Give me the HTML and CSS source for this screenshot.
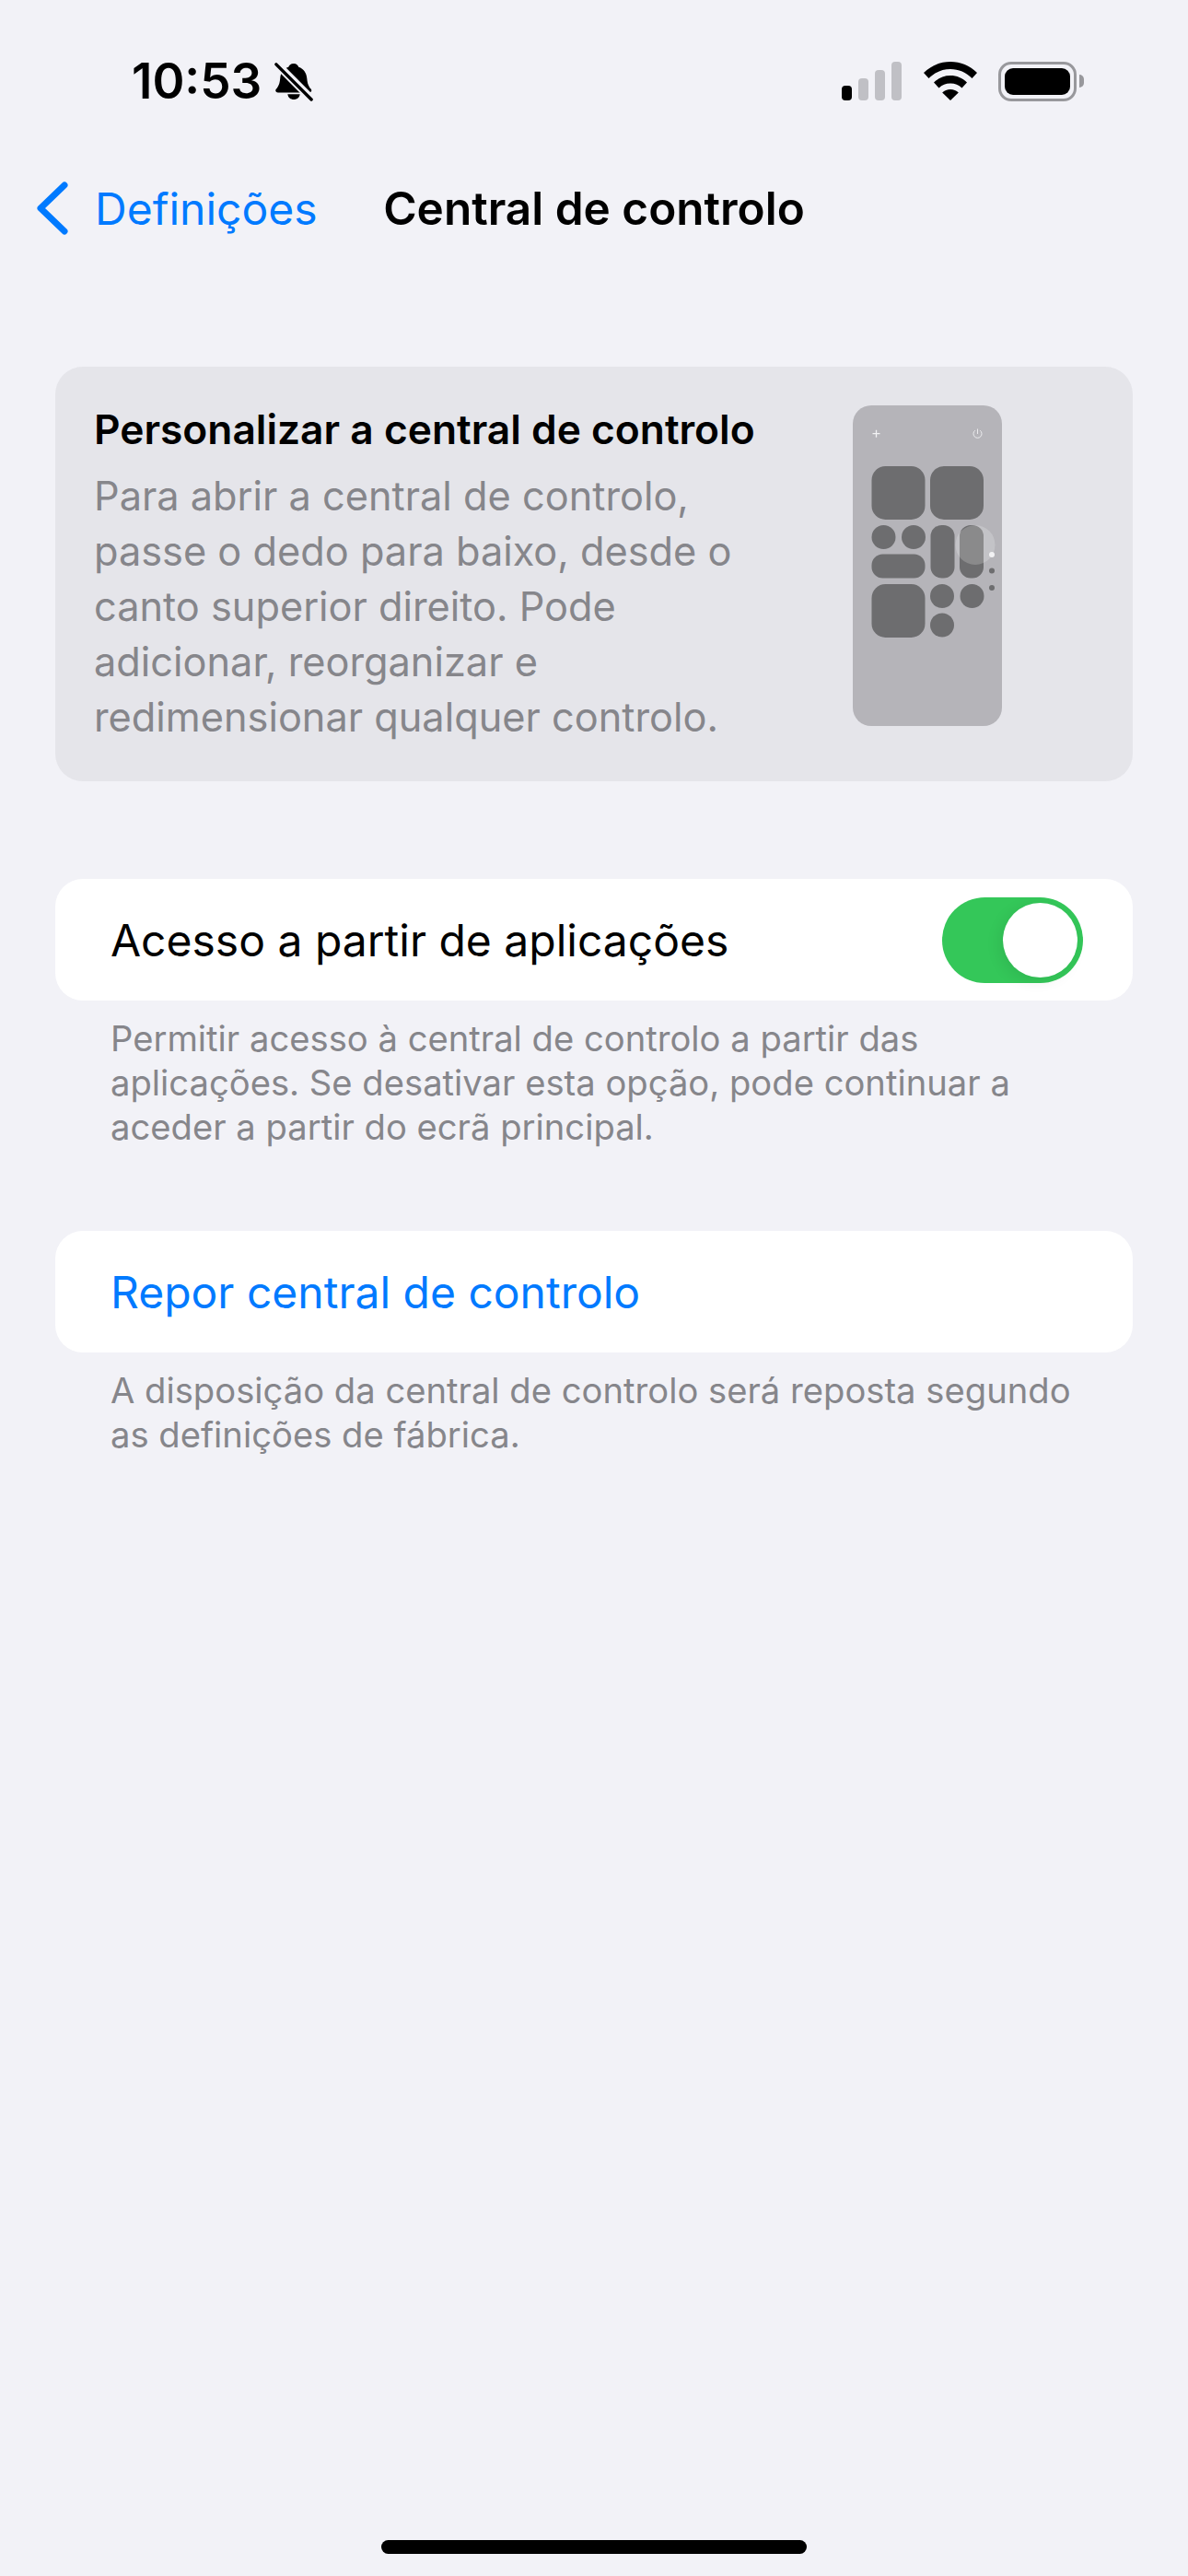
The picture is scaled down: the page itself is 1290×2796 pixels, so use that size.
FILE: index.html
```html
<!DOCTYPE html>
<html lang="pt">
<head>
  <meta charset="UTF-8" />
  <title>Central de controlo</title>
  <link rel="stylesheet" href="styles.css">
</head>
<body>
  <div class="screen">
    <div class="status-bar">
      <div class="status-left">
        <span class="time">10:53</span>
        <svg class="bell" viewBox="0 0 44 44">
          <path d="M22 2c3 0 5 2 5.500 4 6 2 9 7 9.500 13 .5 6 2 9 4.500 12 1.500 2 .5 4-2 4H4c-2.500 0-3.500-2-2-4 2.500-3 4-6 4.500-12 .5-6 3.500-11 9.500-13 .5-2 2.500-4 6-4z" fill="#000"/>
          <path d="M15 37h14c-.5 4-3.500 6-7 6s-6.500-2-7-6z" fill="#000"/>
          <path d="M1 1l42 42" stroke="#f2f2f7" stroke-width="9"/>
          <path d="M2 3l40 40" stroke="#000" stroke-width="3.600" stroke-linecap="round"/>
        </svg>
      </div>
      <div class="status-right">
        <svg class="signal" viewBox="0 0 66 42">
          <rect x="0" y="26" width="11" height="16" rx="4" fill="#000"/>
          <rect x="18" y="18" width="11" height="24" rx="4" fill="#c0c0c5"/>
          <rect x="36" y="9" width="11" height="33" rx="4" fill="#c0c0c5"/>
          <rect x="54" y="0" width="11" height="42" rx="4" fill="#c0c0c5"/>
        </svg>
        <svg class="wifi" viewBox="0 0 58 42">
          <path d="M29 0c11 0 21 4 29 12l-5.500 6C46 11.500 38 8 29 8S12 11.500 5.500 18L0 12C8 4 18 0 29 0z" fill="#000"/>
          <path d="M29 15c7 0 13 2.500 18 7.500l-5.500 6C38 25 34 23.500 29 23.500S20 25 16.500 28.500l-5.500-6C16 17.500 22 15 29 15z" fill="#000"/>
          <path d="M29 30c3.500 0 6.500 1.300 8.800 3.500L29 42l-8.800-8.500C22.500 31.300 25.500 30 29 30z" fill="#000"/>
        </svg>
        <div class="battery">
          <div class="battery-level"></div>
        </div>
        <div class="battery-cap"></div>
      </div>
    </div>

    <div class="nav-bar">
      <div class="back">
        <svg class="chevron" viewBox="0 0 36 58">
          <path d="M31 4L5 29l26 25" fill="none" stroke="#007aff" stroke-width="7" stroke-linecap="round" stroke-linejoin="round"/>
        </svg>
        <span>Definições</span>
      </div>
      <h1 class="nav-title">Central de controlo</h1>
    </div>

    <div class="content">
      <div class="info-card">
        <div class="info-text">
          <h2>Personalizar a central de controlo</h2>
          <p>Para abrir a central de controlo, passe o dedo para baixo, desde o canto superior direito. Pode adicionar, reorganizar e redimensionar qualquer controlo.</p>
        </div>
        <svg class="preview" viewBox="0 0 162 348">
          <rect width="162" height="348" rx="20" fill="#b5b4b9"/>
          <path d="M21.500 30.700h8M25.500 26.700v8" stroke="#f2f2f4" stroke-width="1.300"/>
          <path d="M132.800 27.200a4.500 4.500 0 1 0 5.400 0M135.500 25.500v5.500" fill="none" stroke="#f2f2f4" stroke-width="0.900"/>
          <g fill="#6d6d6f">
            <rect x="20.500" y="66" width="58" height="58" rx="15"/>
            <rect x="84" y="66" width="58" height="58" rx="15"/>
            <circle cx="33.500" cy="143" r="13"/>
            <circle cx="66" cy="143" r="13"/>
            <rect x="20.500" y="161.500" width="58" height="26" rx="12"/>
            <rect x="84.500" y="130" width="26" height="57.500" rx="12"/>
            <rect x="116" y="130" width="26" height="57.500" rx="12"/>
            <rect x="20.500" y="194" width="58" height="58" rx="15"/>
            <circle cx="97" cy="207" r="13"/>
            <circle cx="129.500" cy="207" r="13"/>
            <circle cx="97" cy="238.500" r="13"/>
          </g>
          <circle cx="133" cy="151.500" r="21.500" fill="#fff" fill-opacity="0.2"/>
          <circle cx="151" cy="162" r="3" fill="#f2f2f4"/>
          <circle cx="151" cy="179.500" r="3" fill="#6d6d6f"/>
          <circle cx="151" cy="198" r="3" fill="#6d6d6f"/>
        </svg>
      </div>

      <div class="group">
        <div class="row">
          <span>Acesso a partir de aplicações</span>
          <div class="toggle"><div class="knob"></div></div>
        </div>
        <p class="footnote">Permitir acesso à central de controlo a partir das aplicações. Se desativar esta opção, pode continuar a aceder a partir do ecrã principal.</p>
      </div>

      <div class="group">
        <div class="row">
          <span class="link">Repor central de controlo</span>
        </div>
        <p class="footnote">A disposição da central de controlo será reposta segundo as definições de fábrica.</p>
      </div>
    </div>

    <div class="home-indicator"></div>
  </div>
</body>
</html>
```

FILE: styles.css
```css
* {
  margin: 0;
  padding: 0;
  box-sizing: border-box;
}

body {
  font-family: Inter, "Liberation Sans", sans-serif;
  background: #f2f2f7;
  color: #000;
}

.screen {
  position: relative;
  width: 1290px;
  height: 2796px;
  overflow: hidden;
}

/* Status bar */
.status-bar {
  display: flex;
  justify-content: space-between;
  align-items: center;
  height: 176px;
  padding: 0 113px 0 143px;
}

.status-left {
  display: flex;
  align-items: center;
  gap: 14px;
}

.time {
  font-size: 53px;
  font-weight: 600;
  line-height: 1;
}

.bell {
  width: 42px;
  height: 44px;
}

.status-right {
  display: flex;
  align-items: center;
}

.signal {
  width: 66px;
  height: 42px;
  margin-right: 23px;
}

.wifi {
  width: 58px;
  height: 42px;
  margin-right: 23px;
}

.battery {
  width: 85px;
  height: 43px;
  border: 3px solid #98989c;
  border-radius: 14px;
  padding: 4px;
}

.battery-level {
  height: 100%;
  background: #000;
  border-radius: 9px;
}

.battery-cap {
  width: 5px;
  height: 14px;
  margin-left: 3px;
  background: #98989c;
  border-radius: 0 5px 5px 0;
}

/* Nav bar */
.nav-bar {
  position: relative;
  display: flex;
  align-items: center;
  justify-content: center;
  height: 100px;
}

.back {
  position: absolute;
  left: 39px;
  top: 0;
  height: 100%;
  display: flex;
  align-items: center;
  gap: 28px;
  color: #007aff;
  font-size: 48px;
}

.chevron {
  width: 36px;
  height: 58px;
}

.nav-title {
  font-size: 49.500px;
  font-weight: 600;
}

/* Content */
.content {
  padding: 122px 60px 0;
}

.info-card {
  display: flex;
  justify-content: space-between;
  height: 450px;
  padding: 42px 142px 0 42px;
  background: #e5e5ea;
  border-radius: 30px;
}

.info-text {
  width: 760px;
}

.info-text h2 {
  font-size: 44.300px;
  font-weight: 600;
  line-height: 52px;
  margin-bottom: 16px;
}

.info-text p {
  font-size: 43.300px;
  line-height: 60px;
  color: #86868b;
}

.preview {
  width: 162px;
  height: 348px;
}

.group {
  margin-top: 106px;
}

.group + .group {
  margin-top: 89px;
}

.row {
  display: flex;
  align-items: center;
  justify-content: space-between;
  height: 132px;
  padding: 0 54px 0 60px;
  background: #fff;
  border-radius: 30px;
  font-size: 48px;
}

.link {
  color: #007aff;
}

.toggle {
  width: 153px;
  height: 93px;
  padding: 6px;
  background: #34c759;
  border-radius: 47px;
  display: flex;
  justify-content: flex-end;
}

.knob {
  width: 81px;
  height: 81px;
  background: #fff;
  border-radius: 50%;
  box-shadow: -4px 4px 16px rgba(0, 0, 0, 0.08);
}

.footnote {
  padding: 17px 60px 0;
  font-size: 38.200px;
  line-height: 48px;
  color: #86868b;
}

.home-indicator {
  position: absolute;
  left: 414px;
  bottom: 24px;
  width: 462px;
  height: 15px;
  background: #000;
  border-radius: 8px;
}
```
